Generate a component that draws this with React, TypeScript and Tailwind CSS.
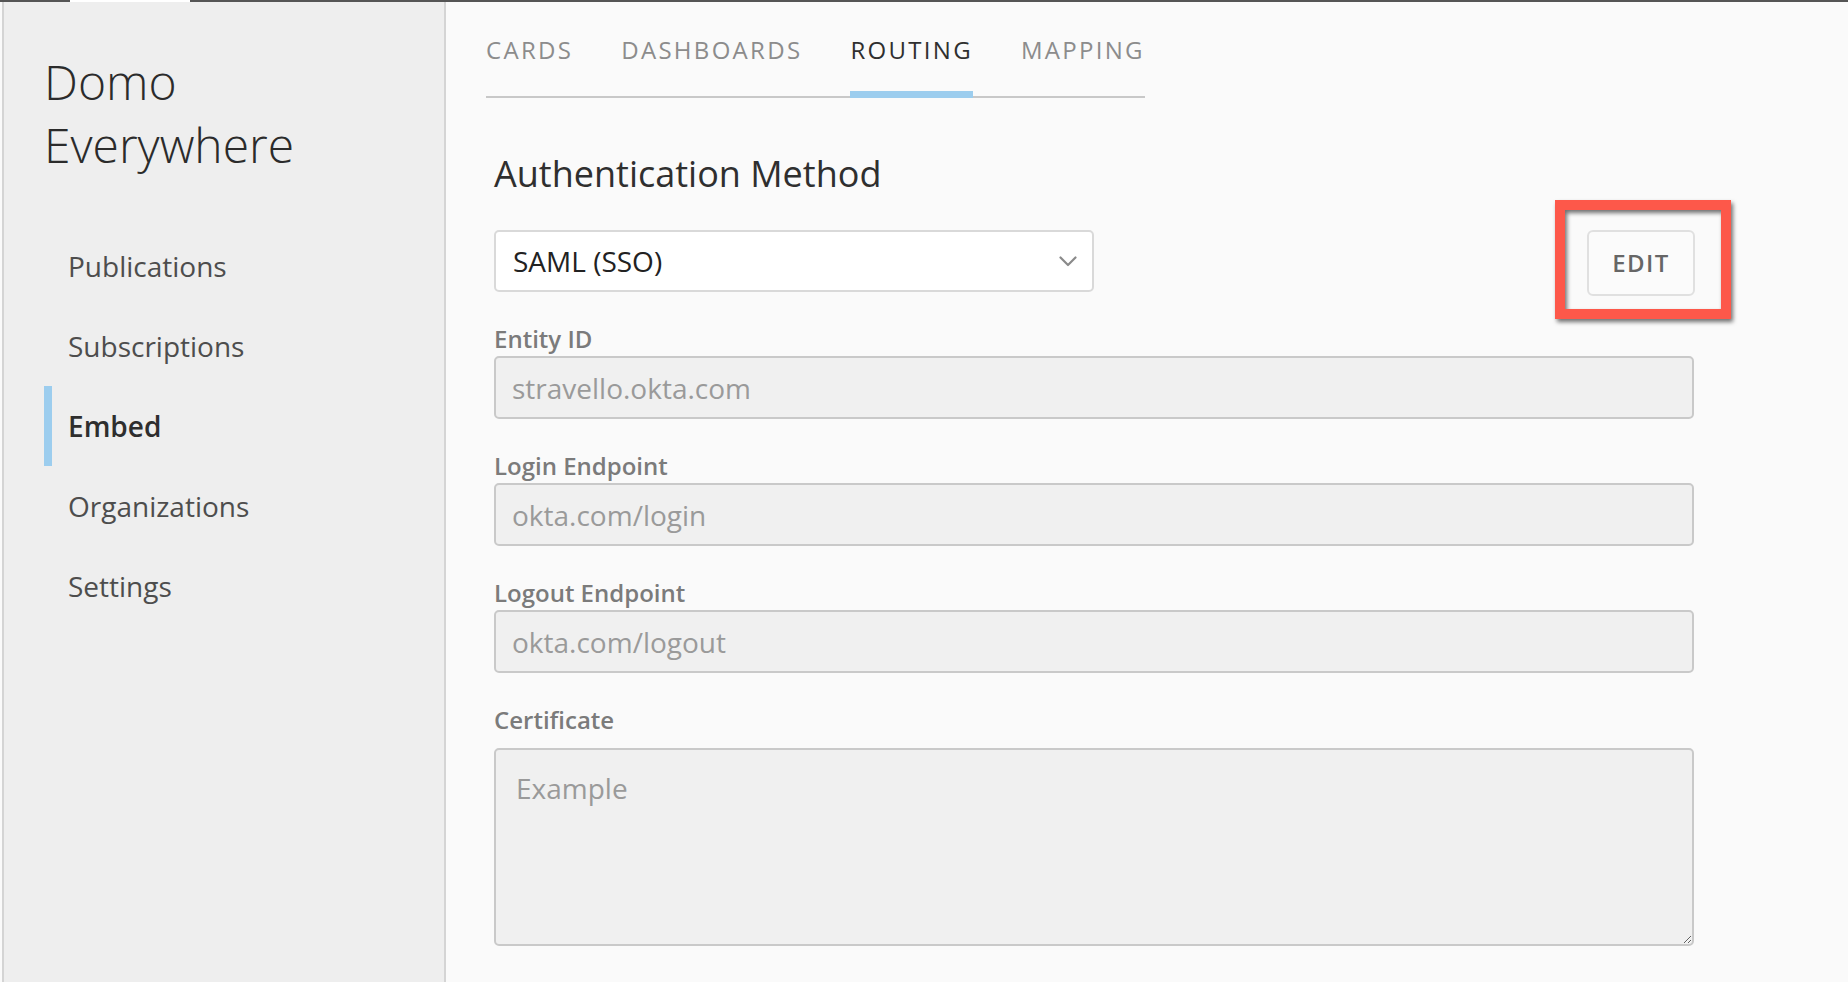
const navItems = ["Publications", "Subscriptions", "Embed", "Organizations", "Settings"];
const tabs = ["CARDS", "DASHBOARDS", "ROUTING", "MAPPING"];

function Sidebar() {
    return (
        <aside className="ml-[2px] w-[444px] shrink-0 bg-[#eeeeee] border-l-2 border-r-2 border-[#d4d4d4] pl-[40px] pt-[48px]">
            <h1 className="text-[48px] leading-[63px] font-light text-[#2b2b2b]">
                Domo
                <br />
                Everywhere
            </h1>
            <ul className="mt-[50px]">
                {navItems.map((item) => {
                    const active = item === "Embed";
                    return (
                        <li key={item} className="flex h-[80px] items-center">
                            <div className={active ? "h-full w-[8px] bg-[#9ccdee]" : "h-full w-[8px]"} />
                            <a
                                href="#"
                                className={
                                    active
                                        ? "pl-[16px] text-[28px] leading-[38px] font-semibold text-[#2e2e2e]"
                                        : "pl-[16px] text-[28px] leading-[38px] text-[#4d4d4d]"
                                }
                            >
                                {item}
                            </a>
                        </li>
                    );
                })}
            </ul>
        </aside>
    );
}

function Field({ label, value }: { label: string; value: string }) {
    return (
        <div className="mt-[30px] first:mt-0">
            <label className="block text-[24px] leading-[34px] font-semibold text-[#7b7b7b]">{label}</label>
            <input
                readOnly
                value={value}
                className="block h-[63px] w-full rounded-[5px] border-2 border-[#c9c9c9] bg-[#f0f0f0] px-[16px] text-[28px] leading-[38px] text-[#9a9a9a] outline-none"
            />
        </div>
    );
}

export default function App() {
    return (
        <div className="flex min-h-screen flex-col bg-[#fafafa]" style={{ fontFamily: '"Open Sans", sans-serif' }}>
            <div className="h-[2px] w-full shrink-0 bg-[#555555]">
                <div className="ml-[70px] h-full w-[120px] bg-white" />
            </div>
            <div className="flex flex-1">
                <Sidebar />
                <main className="flex-1 pl-[40px] pt-[32px]">
                    <div className="inline-flex gap-[48px] border-b-2 border-[#c8c8c8]">
                        {tabs.map((tab) => {
                            const active = tab === "ROUTING";
                            return (
                                <button
                                    key={tab}
                                    className={
                                        active
                                            ? "-mb-[2px] border-b-[7px] border-[#9ccdee] pb-[25px] text-[24px] leading-[32px] tracking-[2.3px] text-[#2f2f2f]"
                                            : "-mb-[2px] border-b-[7px] border-transparent pb-[25px] text-[24px] leading-[32px] tracking-[2.3px] text-[#8c8c8c]"
                                    }
                                >
                                    {tab}
                                </button>
                            );
                        })}
                    </div>

                    <div className="ml-[8px] w-[1200px]">
                        <h2 className="mt-[53px] text-[36px] leading-[46px] text-[#2f2f2f]">Authentication Method</h2>

                        <div className="mt-[33px] flex items-start justify-between">
                            <div className="flex h-[62px] w-[600px] items-center justify-between rounded-[5px] border-2 border-[#d9d9d9] bg-white pl-[17px] pr-[15px]">
                                <span className="text-[28px] leading-[38px] text-[#222222]">SAML (SSO)</span>
                                <svg width="18" height="11" viewBox="0 0 18 11" fill="none">
                                    <polyline points="1.5,1.5 9,9 16.5,1.5" stroke="#8a8a8a" strokeWidth="2.2" strokeLinecap="round" strokeLinejoin="round" />
                                </svg>
                            </div>
                            <div className="relative -mr-[1px]">
                                <button className="flex h-[66px] w-[108px] items-center justify-center rounded-[6px] border-2 border-[#e0e0e0] bg-[#fbfbfb] text-[24px] leading-[32px] font-semibold tracking-[1.4px] text-[#666666]">
                                    EDIT
                                </button>
                                <div className="pointer-events-none absolute -left-[32px] -top-[30px] h-[119px] w-[176px] border-[10px] border-[#fd584a] drop-shadow-[2px_3px_2px_rgba(0,0,0,0.55)]" />
                            </div>
                        </div>

                        <div className="mt-[26px]">
                            <Field label="Entity ID" value="stravello.okta.com" />
                            <Field label="Login Endpoint" value="okta.com/login" />
                            <Field label="Logout Endpoint" value="okta.com/logout" />
                            <div className="mt-[30px]">
                                <label className="block text-[24px] leading-[34px] font-semibold text-[#7b7b7b]">Certificate</label>
                                <textarea
                                    placeholder="Example"
                                    className="mt-[11px] block h-[198px] w-full rounded-[5px] border-2 border-[#c9c9c9] bg-[#f0f0f0] px-[20px] py-[19px] text-[28px] leading-[38px] text-[#9a9a9a] placeholder:text-[#9a9a9a] outline-none"
                                />
                            </div>
                        </div>
                    </div>
                </main>
            </div>
        </div>
    );
}
